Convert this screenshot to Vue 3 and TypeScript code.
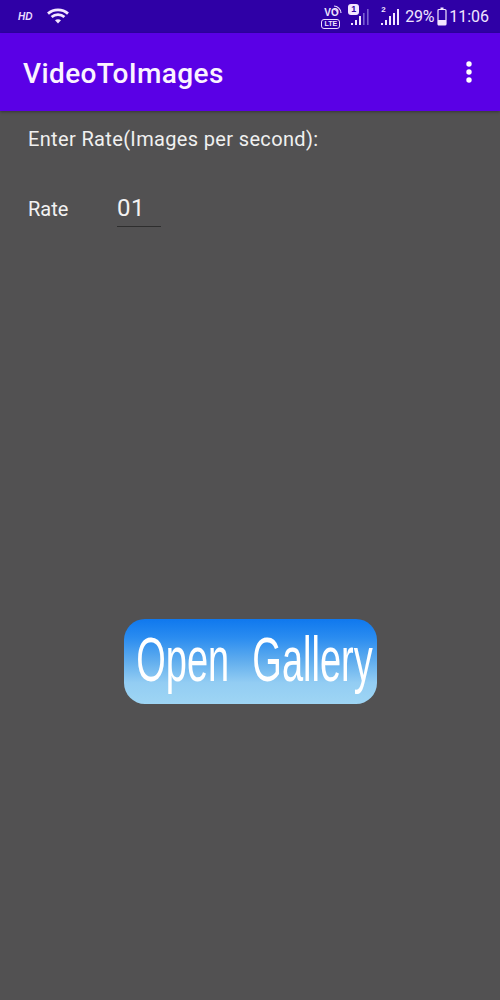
<script setup lang="ts">
const title: string = 'VideoToImages'
</script>

<template>
  <div class="screen">
    <header class="status">
      <div class="left">
        <span class="hd">HD</span>
        <svg class="wifi" width="22" height="16" viewBox="0 0 22 16">
          <path d="M1 5.6C6.600.6 15.400.6 21 5.6" fill="none" stroke="#f3e6ff" stroke-width="2.800" />
          <path d="M4.600 9C8.200 5.900 13.800 5.900 17.400 9" fill="none" stroke="#f3e6ff" stroke-width="2.800" />
          <path d="M8 12.200c1.700-1.300 4.300-1.300 6 0L11 15.500z" fill="#f3e6ff" />
        </svg>
      </div>
      <div class="right">
        <div class="volte">
          <span class="vo">VO</span>
          <svg class="waves" width="9" height="9" viewBox="0 0 9 9">
            <path d="M1 1c3.500 0 7 3.500 7 7M1 4.500c1.700 0 3.500 1.800 3.500 3.500" fill="none" stroke="#e9dcff" stroke-width="1.200" />
          </svg>
          <span class="lte">LTE</span>
        </div>
        <div class="sim">
          <span class="badge">1</span>
          <svg class="bars" width="20" height="19" viewBox="0 0 20 19">
            <path d="M1 15h2v2H1zM5 12h2v5H5zM9 8h2v9H9z" fill="#f3e6ff" />
            <path d="M13 5h1.600v12H13zM17 1h1.600v16H17z" fill="#7a5fd0" />
          </svg>
        </div>
        <div class="sim second">
          <span class="two">2</span>
          <svg class="bars" width="20" height="19" viewBox="0 0 20 19">
            <path d="M1 15h2v2H1zM5 12h2v5H5zM9 8h2v9H9zM13 5h2v12h-2zM17 1h2v16h-2z" fill="#f3e6ff" />
          </svg>
        </div>
        <span class="pct">29%</span>
        <svg class="battery" width="10" height="19" viewBox="0 0 10 19">
          <path d="M3.500.5h3v2h-3z" fill="#f3e6ff" />
          <rect x="1" y="2.500" width="8" height="15.500" rx="1" fill="none" stroke="#f3e6ff" stroke-width="1.200" />
          <rect x="1" y="13" width="8" height="5" fill="#f3e6ff" />
        </svg>
        <span class="clock">11:06</span>
      </div>
    </header>

    <div class="appbar">
      <h1 class="title">{{ title }}</h1>
      <svg class="more" width="8" height="22" viewBox="0 0 8 22">
        <circle cx="4" cy="3" r="2.700" fill="#fff" />
        <circle cx="4" cy="11" r="2.700" fill="#fff" />
        <circle cx="4" cy="19" r="2.700" fill="#fff" />
      </svg>
    </div>

    <main class="body">
      <p class="prompt">Enter Rate(Images per second):</p>
      <div class="rate-row">
        <span class="rate-label">Rate</span>
        <span class="rate-input">01</span>
      </div>
      <button class="gallery" type="button"><span class="gallery-text">Open&nbsp;&nbsp;Gallery</span></button>
    </main>
  </div>
</template>

<style scoped>
.screen {
  width: 500px;
  height: 1000px;
  display: flex;
  flex-direction: column;
  background: #525152;
  font-family: Roboto, "Liberation Sans", sans-serif;
  color: #f2f2f2;
  overflow: hidden;
}
.status {
  height: 33px;
  flex: none;
  background: #2f00a6;
  display: flex;
  justify-content: space-between;
  align-items: center;
  padding: 0 11px 0 18px;
  box-sizing: border-box;
}
.left {
  display: flex;
  align-items: center;
  gap: 15px;
}
.hd {
  font: italic 700 10px "Liberation Sans", sans-serif;
  color: #eadcff;
}
.wifi {
  margin-top: -2px;
}
.right {
  display: flex;
  align-items: center;
}
.volte {
  width: 21px;
  height: 25px;
  position: relative;
  margin-right: 8px;
  margin-top: -1px;
}
.vo {
  position: absolute;
  left: 3px;
  top: 4px;
  font: 700 10px/10px "Liberation Sans", sans-serif;
  color: #f0e6ff;
}
.waves {
  position: absolute;
  right: 0;
  top: 1px;
}
.lte {
  position: absolute;
  left: 0;
  bottom: 0;
  width: 19px;
  height: 10px;
  border: 1px solid #e9dcff;
  border-radius: 3px;
  box-sizing: border-box;
  font: 700 7px/8px "Liberation Sans", sans-serif;
  text-align: center;
  color: #f0e6ff;
}
.sim {
  position: relative;
  width: 20px;
  height: 19px;
  margin-top: 1px;
  margin-right: 10px;
}
.sim.second {
  margin-right: 5px;
}
.bars {
  display: block;
}
.badge {
  position: absolute;
  left: -2px;
  top: -4px;
  width: 11px;
  height: 11px;
  border-radius: 3px;
  background: #f3e6ff;
  color: #2f00a6;
  font: 700 9px/11px "Liberation Sans", sans-serif;
  text-align: center;
}
.two {
  position: absolute;
  left: 1px;
  top: -3px;
  font: 700 8px/9px "Liberation Sans", sans-serif;
  color: #f3e6ff;
}
.pct,
.clock {
  font-size: 16px;
  color: #f0e6ff;
}
.pct {
  letter-spacing: -0.3px;
}
.battery {
  margin: 0 2px 0 3px;
}
.appbar {
  height: 78px;
  flex: none;
  background: #5a00e6;
  display: flex;
  align-items: center;
  justify-content: space-between;
  padding: 0 27px 0 23px;
  box-sizing: border-box;
  position: relative;
  box-shadow: 0 1px 3px rgba(0, 0, 0, 0.35);
}
.title {
  margin: 3px 0 0;
  font-size: 28px;
  font-weight: 500;
  letter-spacing: 0.4px;
  color: #fbf3ff;
}
.more {
  margin-top: 0;
}
.body {
  flex: 1;
  display: flex;
  flex-direction: column;
  padding-left: 28px;
}
.prompt {
  margin: 16px 0 0;
  font-size: 20px;
  line-height: 24px;
  letter-spacing: 0.35px;
  color: #f0f0f0;
}
.rate-row {
  display: flex;
  align-items: flex-start;
  margin-top: 39px;
}
.rate-label {
  width: 89px;
  margin-top: 7px;
  font-size: 20px;
  line-height: 24px;
}
.rate-input {
  width: 44px;
  height: 37px;
  box-sizing: border-box;
  border-bottom: 1px solid #2e2e2e;
  font-size: 24px;
  line-height: 36px;
  letter-spacing: 0.5px;
}
.gallery {
  align-self: flex-start;
  margin: 392px 0 0 96px;
  width: 253px;
  height: 85px;
  padding: 0;
  border: 0;
  border-radius: 21px;
  background: linear-gradient(#0f78ee 0%, #2a8cf0 22%, #62aeee 50%, #93cdf3 75%, #9ed5f4 100%);
  color: #fff;
  display: flex;
  align-items: center;
  justify-content: center;
}
.gallery-text {
  display: block;
  font: 400 38px/48px "Liberation Sans", sans-serif;
  white-space: nowrap;
  word-spacing: 1px;
  transform: scaleY(1.65);
  margin-left: 8px;
  margin-top: -4px;
}
</style>
